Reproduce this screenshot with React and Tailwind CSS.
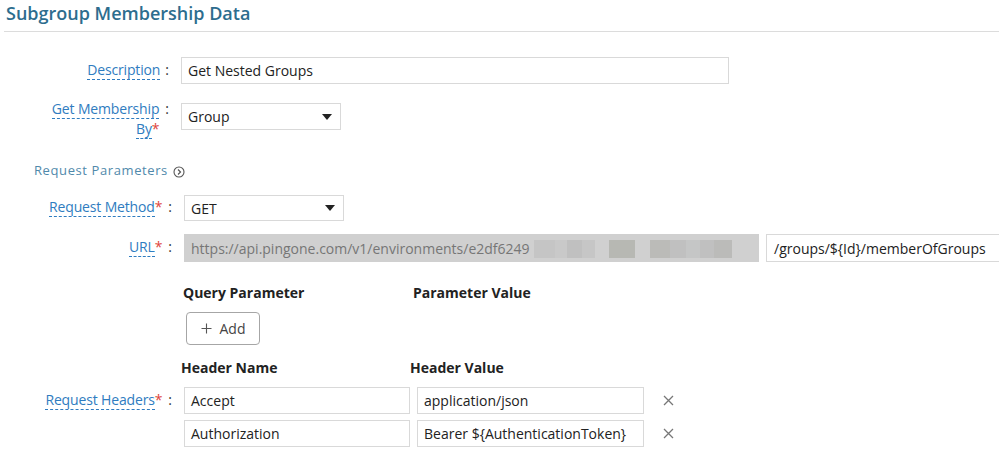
import React from "react";

const FONT = { fontFamily: '"Open Sans", "Liberation Sans", sans-serif' };

function Label({ text, req }) {
  return (
    <span className="whitespace-nowrap tracking-[-0.15px]">
      <span className="text-[#2f7cc0] border-b border-dashed border-[#2f7cc0]">{text}</span>
      {req && <span className="text-[#e0453a]">*</span>}
    </span>
  );
}

function Caret() {
  return (
    <svg width="10" height="6" viewBox="0 0 10 6" className="shrink-0">
      <path d="M0 0 H10 L5 6 Z" fill="#222" />
    </svg>
  );
}

function XIcon() {
  return (
    <svg width="11" height="11" viewBox="0 0 11 11">
      <path d="M1 1 L10 10 M10 1 L1 10" stroke="#777" strokeWidth="1.3" />
    </svg>
  );
}

export default function App() {
  return (
    <div style={FONT} className="w-[999px] h-[450px] overflow-hidden bg-white text-[14px] text-[#333]">
      {/* Title */}
      <div className="ml-[4px] h-[32px] border-b border-[#dcdcdc] pt-[1px] pl-[2px]">
        <div className="text-[18px] leading-[24px] font-semibold text-[#2d6d8e]">Subgroup Membership Data</div>
      </div>

      {/* Description */}
      <div className="mt-[25px] flex h-[27px] items-center">
        <div className="w-[170px] shrink-0 flex justify-end pr-[1px] pb-[3px]">
          <Label text="Description" />
          <span className="ml-[5px] text-[#333]">:</span>
        </div>
        <div className="ml-[11px] shrink-0 w-[548px] h-[27px] border border-[#d9d9d9] flex items-center px-[6px] text-[#222]">
          Get Nested Groups
        </div>
      </div>

      {/* Get Membership By */}
      <div className="mt-[19px] flex h-[27px] items-start">
        <div className="w-[170px] shrink-0 flex justify-end pr-[1px] -mt-[4px]">
          <div className="text-right leading-[20px] tracking-[-0.15px]">
            <span className="text-[#2f7cc0] border-b border-dashed border-[#2f7cc0]">Get Membership</span>
            <br />
            <Label text="By" req />
          </div>
          <span className="ml-[6px] leading-[20px]">:</span>
        </div>
        <div className="ml-[11px] shrink-0 w-[160px] h-[27px] border border-[#d9d9d9] flex items-center justify-between pl-[6px] pr-[8px] text-[#222]">
          <span>Group</span>
          <Caret />
        </div>
      </div>

      {/* Request Parameters */}
      <div className="mt-[32px] pl-[34px] flex items-center h-[18px] text-[13px] tracking-[0.6px] text-[#5089ab]">
        <span>Request Parameters</span>
        <svg width="12" height="12" viewBox="0 0 12 12" className="ml-[5px] mt-[2px]">
          <circle cx="6" cy="6" r="5" fill="none" stroke="#555" strokeWidth="1.1" />
          <path d="M5 3.5 L7.5 6 L5 8.5" fill="none" stroke="#555" strokeWidth="1.2" />
        </svg>
      </div>

      {/* Request Method */}
      <div className="mt-[15px] flex h-[26px] items-center">
        <div className="w-[173px] shrink-0 flex justify-end pr-[1px] pb-[3px]">
          <Label text="Request Method" req />
          <span className="ml-[6px]">:</span>
        </div>
        <div className="ml-[11px] shrink-0 w-[160px] h-[26px] border border-[#d9d9d9] flex items-center justify-between pl-[6px] pr-[8px] text-[#222]">
          <span>GET</span>
          <Caret />
        </div>
      </div>

      {/* URL */}
      <div className="mt-[13px] flex h-[28px] items-center">
        <div className="w-[173px] shrink-0 flex justify-end pr-[1px] pb-[3px]">
          <Label text="URL" req />
          <span className="ml-[6px]">:</span>
        </div>
        <div className="ml-[11px] shrink-0 w-[575px] h-[28px] bg-[#d0d0d0] flex items-center pl-[7px] text-[#767676] whitespace-nowrap">
          <span>https://api.pingone.com/v1/environments/e2df6249</span>
          <span className="ml-[4px] flex h-[18px] mt-[1px]">
            <span className="w-[21px] bg-[#c5c5c5]" />
            <span className="w-[12px] bg-[#c9c9c9]" />
            <span className="w-[15px] bg-[#c0c0c0]" />
            <span className="w-[13px] bg-[#c6c6c6]" />
            <span className="w-[14px] bg-[#d0d0d0]" />
            <span className="w-[26px] bg-[#b7b8b3]" />
            <span className="w-[15px] bg-[#d0d0d0]" />
            <span className="w-[20px] bg-[#bbbbb8]" />
            <span className="w-[16px] bg-[#c0c0c0]" />
            <span className="w-[14px] bg-[#c5c6c6]" />
            <span className="w-[14px] bg-[#c0c0c0]" />
            <span className="w-[18px] bg-[#bbbbb9]" />
          </span>
        </div>
        <div className="ml-[7px] shrink-0 w-[240px] h-[28px] border border-[#d9d9d9] flex items-center pl-[7px] text-[#222] whitespace-nowrap">
          /groups/${"{Id}"}/memberOfGroups
        </div>
      </div>

      {/* Query Parameter headers */}
      <div className="mt-[20px] flex h-[20px] items-center font-bold text-[#222]">
        <span className="ml-[183px] w-[230px]">Query Parameter</span>
        <span>Parameter Value</span>
      </div>

      {/* Add button */}
      <div className="mt-[10px] ml-[186px]">
        <button className="w-[74px] h-[33px] border border-[#a6a6a6] rounded-[4px] flex items-center justify-center gap-[8px] text-[#444] bg-white">
          <svg width="11" height="11" viewBox="0 0 11 11">
            <path d="M5.5 0.5 V10.5 M0.5 5.5 H10.5" stroke="#555" strokeWidth="1.1" />
          </svg>
          <span>Add</span>
        </button>
      </div>

      {/* Header headers */}
      <div className="mt-[12px] flex h-[20px] items-center font-bold text-[#222]">
        <span className="ml-[181px] w-[229px]">Header Name</span>
        <span>Header Value</span>
      </div>

      {/* Header row 1 */}
      <div className="mt-[10px] flex h-[27px] items-center">
        <div className="w-[173px] shrink-0 flex justify-end pr-[1px] pb-[3px]">
          <Label text="Request Headers" req />
          <span className="ml-[6px]">:</span>
        </div>
        <div className="ml-[11px] shrink-0 w-[226px] h-[27px] border border-[#d9d9d9] flex items-center px-[6px] text-[#222]">Accept</div>
        <div className="ml-[7px] shrink-0 w-[227px] h-[27px] border border-[#d9d9d9] flex items-center px-[6px] text-[#222]">application/json</div>
        <div className="ml-[19px]"><XIcon /></div>
      </div>

      {/* Header row 2 */}
      <div className="mt-[6px] flex h-[27px] items-center">
        <div className="w-[173px] shrink-0" />
        <div className="ml-[11px] shrink-0 w-[226px] h-[27px] border border-[#d9d9d9] flex items-center px-[6px] text-[#222]">Authorization</div>
        <div className="ml-[7px] shrink-0 w-[227px] h-[27px] border border-[#d9d9d9] flex items-center px-[6px] text-[#222] whitespace-nowrap">Bearer ${"{AuthenticationToken}"}</div>
        <div className="ml-[19px]"><XIcon /></div>
      </div>
    </div>
  );
}
